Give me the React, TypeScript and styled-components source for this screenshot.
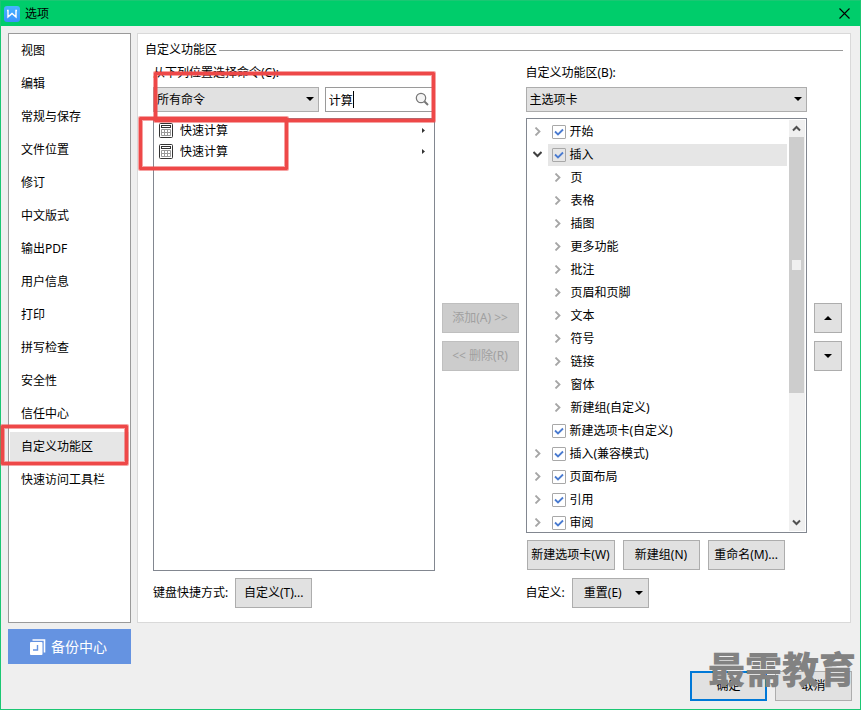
import React from 'react';
import styled, { createGlobalStyle, css } from 'styled-components';

const GlobalStyle = createGlobalStyle`
  *, *::before, *::after { box-sizing: border-box; }
  body {
    margin: 0;
    background: #efefef;
    color: #000;
    font: 12px/18px "Noto Sans", "Noto Sans CJK SC", sans-serif;
  }
  button, input, select { font: inherit; color: inherit; margin: 0; }
`;

const Window = styled.div`
  min-height: 100vh;
  display: flex;
  flex-direction: column;
  border: 1px solid #1bc773;
  background: #efefef;
`;

const TitleBar = styled.header`
  height: 25px;
  display: flex;
  align-items: center;
  gap: 5px;
  padding: 0 10px 0 3px;
  background: #00cd6b;
`;

const Title = styled.h1`
  flex: 1;
  margin: 0;
  font-size: 12px;
  font-weight: 400;
`;

const CloseButton = styled.button`
  display: flex;
  padding: 0;
  border: 0;
  background: none;
`;

const Body = styled.div`
  flex: 1;
  display: grid;
  grid-template-columns: 123px minmax(0, 1fr);
  grid-template-rows: 1fr auto;
  gap: 6px;
  padding: 7px 8px 8px 7px;
`;

const Sidebar = styled.nav`
  display: flex;
  flex-direction: column;
  gap: 4px;
  padding: 2px 1px;
  border: 1px solid #9a9a9a;
  background: #fff;
`;

const NavItem = styled.a<{ $active?: boolean }>`
  position: relative;
  display: flex;
  align-items: center;
  height: 29px;
  padding-left: 11px;
  color: inherit;
  text-decoration: none;
  background: ${(p) => (p.$active ? '#e6e6e6' : 'transparent')};
`;

const Panel = styled.main`
  display: flex;
  flex-direction: column;
  gap: 5px;
  margin-right: 1px;
  padding: 7px 7px 14px;
  border: 1px solid #d9d9d9;
  background: #fff;
`;

const SectionTitle = styled.h2`
  display: flex;
  align-items: center;
  gap: 2px;
  margin: 0;
  font-size: 12px;
  font-weight: 400;

  &::after {
    content: '';
    flex: 1;
    height: 1px;
    background: #9a9a9a;
  }
`;

const Columns = styled.div`
  flex: 1;
  display: grid;
  grid-template-columns: minmax(0, 1fr) 77px minmax(0, 1fr) 28px;
  gap: 7px;
  padding: 0 1px 0 8px;
`;

const Column = styled.section`
  display: flex;
  flex-direction: column;
`;

const FieldLabel = styled.label`
  margin-bottom: 5px;
`;

const ControlRow = styled.div`
  position: relative;
  display: flex;
  gap: 6px;
  margin-bottom: 6px;
`;

const SelectBox = styled.span`
  position: relative;
  flex: 1;
  display: flex;

  svg {
    position: absolute;
    right: 5px;
    top: 10px;
    pointer-events: none;
  }
`;

const Select = styled.select`
  appearance: none;
  width: 100%;
  height: 25px;
  padding: 0 20px 0 3px;
  border: 1px solid #adadad;
  border-radius: 0;
  background: #e1e1e1;
`;

const SearchBox = styled.span`
  position: relative;
  flex: 0 0 39%;
  display: flex;

  svg {
    position: absolute;
    right: 6px;
    top: 5px;
  }
`;

const SearchInput = styled.input`
  width: 100%;
  height: 25px;
  padding: 0 24px 0 3px;
  border: 1px solid #9a9a9a;
`;

const Caret = styled.i`
  position: absolute;
  left: 28px;
  top: 4px;
  width: 1px;
  height: 17px;
  background: #000;
`;

const listFrame = css`
  flex: 1 1 0;
  border: 1px solid #828790;
  background: #fff;
`;

const CommandList = styled.ul`
  ${listFrame}
  position: relative;
  min-height: 160px;
  margin: 0 0 7px;
  padding: 1px 9px 1px 5px;
  list-style: none;
`;

const Command = styled.li`
  display: flex;
  align-items: center;
  gap: 7px;
  height: 21px;

  span { flex: 1; }
`;

const Tree = styled.div`
  ${listFrame}
  display: flex;
  gap: 2px;
  min-height: 160px;
  margin-bottom: 7px;
  padding: 1px 1px 1px 0;
  overflow: hidden;
`;

const TreeRows = styled.ul`
  flex: 1;
  height: 0;
  margin: 0;
  padding: 0;
  list-style: none;
`;

const TreeRow = styled.li`
  display: grid;
  grid-template-columns: 21px 1fr;
  align-items: center;
  justify-items: center;
  height: 23px;
`;

const TreeLabel = styled.label<{ $active?: boolean }>`
  grid-column: 2;
  justify-self: stretch;
  display: flex;
  align-items: center;
  gap: 4px;
  height: 22px;
  padding-left: 4px;
  background: ${(p) => (p.$active ? '#e6e6e6' : 'transparent')};
`;

const TreeChild = styled.span`
  grid-column: 2;
  justify-self: stretch;
  display: grid;
  grid-template-columns: 19px 1fr;
  column-gap: 4px;
  align-items: center;

  svg { justify-self: center; }
`;

const CheckFrame = styled.span`
  display: grid;
  flex: none;
  place-items: center;

  > * { grid-area: 1 / 1; }
  svg { pointer-events: none; }
`;

const Checkbox = styled.input`
  appearance: none;
  width: 14px;
  height: 14px;
  border: 1px solid #a8a8a8;
  border-radius: 1px;
  background: transparent;
`;

const Scrollbar = styled.div`
  display: flex;
  flex-direction: column;
  align-items: center;
  width: 16px;
  padding-right: 1px;
  background: #f0f0f0;
`;

const ScrollButton = styled.button`
  display: flex;
  align-items: center;
  justify-content: center;
  width: 100%;
  height: 17px;
  padding: 0;
  border: 0;
  background: none;
`;

const Thumb = styled.div`
  flex: 17;
  display: grid;
  place-items: center;
  width: 100%;
  background: #cdcdcd;

  &::after {
    content: '';
    width: 9px;
    height: 10px;
    background: #f0f0f0;
  }
`;

const TrackRest = styled.div`
  flex: 8;
`;

const Button = styled.button<{ $wide?: boolean; $primary?: boolean }>`
  display: flex;
  align-items: center;
  justify-content: center;
  width: ${(p) => (p.$wide ? '88px' : '77px')};
  height: 30px;
  padding: 0;
  border: ${(p) => (p.$primary ? '2px solid #0078d7' : '1px solid #adadad')};
  background: #e1e1e1;
  white-space: nowrap;

  &:disabled {
    border-color: #bfbfbf;
    background: #cccccc;
    color: #a0a0a0;
  }
`;

const MenuButton = styled(Button)`
  justify-content: flex-end;
  gap: 13px;
  padding-right: 5px;
`;

const SquareButton = styled(Button)`
  width: 28px;
`;

const MiddleStack = styled.div`
  display: flex;
  flex-direction: column;
  justify-content: center;
  gap: 8px;
  padding-top: 2px;
`;

const ButtonRow = styled.div<{ $gap: number }>`
  display: flex;
  align-items: center;
  gap: ${(p) => p.$gap}px;
`;

const TabActions = styled(ButtonRow)`
  margin-bottom: 8px;
  padding-left: 1px;
`;

const BackupButton = styled.button`
  align-self: start;
  display: flex;
  align-items: center;
  justify-content: center;
  gap: 5px;
  height: 35px;
  padding: 0 2px 0 0;
  border: 0;
  background: #6593e1;
  color: #fff;
  font-size: 14px;
`;

const Footer = styled.footer`
  position: relative;
  display: flex;
  justify-content: flex-end;
  gap: 8px;
  padding-top: 42px;
`;

const Watermark = styled.span`
  position: absolute;
  right: -4px;
  bottom: 11px;
  color: #828282;
  font: 900 37px/44px "Noto Sans CJK SC", sans-serif;
  pointer-events: none;
`;

const highlight = css`
  position: absolute;
  z-index: 1;
  border: 3px solid #ee4848;
  border-radius: 1px;
  box-shadow: 0 0 0 1px rgba(238, 72, 72, 0.5), inset 0 0 0 1px rgba(238, 72, 72, 0.5);
  pointer-events: none;
`;

const NavHighlight = styled.i`
  ${highlight}
  inset: -7px 1px -4px -9px;
`;

const SearchHighlight = styled.i`
  ${highlight}
  inset: -15px 0 -10px 1px;
`;

const ResultHighlight = styled.li`
  ${highlight}
  left: -15px;
  top: -2px;
  width: 149px;
  height: 53px;
`;

const Logo = () => (
  <svg width="16" height="16" viewBox="0 0 16 16" aria-hidden="true">
    <defs>
      <linearGradient id="logo" x1="0" y1="0" x2="0" y2="1">
        <stop offset="0" stopColor="#46b4ff" />
        <stop offset="1" stopColor="#3a92fb" />
      </linearGradient>
    </defs>
    <rect width="16" height="16" rx="3" fill="url(#logo)" />
    <path d="M3 4.5H4V11L8 7.5L12 11V4.5H13" fill="none" stroke="#fff" strokeWidth="1.4" />
  </svg>
);

const CloseIcon = () => (
  <svg width="11" height="11" viewBox="0 0 11 11" aria-hidden="true">
    <path d="M.5 .5L10.500 10.500M10.500 .5L.5 10.500" stroke="#000" strokeWidth="1.1" />
  </svg>
);

const CaretDown = () => (
  <svg width="8" height="4" viewBox="0 0 8 4" aria-hidden="true">
    <path d="M0 0H8L4 4Z" />
  </svg>
);

const CaretUp = () => (
  <svg width="8" height="4" viewBox="0 0 8 4" aria-hidden="true">
    <path d="M0 4H8L4 0Z" />
  </svg>
);

const CaretRight = () => (
  <svg width="3" height="5" viewBox="0 0 3 5" aria-hidden="true">
    <path d="M0 0V5L3 2.500Z" fill="#333" />
  </svg>
);

const Chevron = ({ open }: { open?: boolean }) =>
  open ? (
    <svg width="9" height="7" viewBox="0 0 9 7" aria-hidden="true">
      <path d="M.5 1L4.500 5L8.500 1" fill="none" stroke="#404040" strokeWidth="2" />
    </svg>
  ) : (
    <svg width="7" height="9" viewBox="0 0 7 9" aria-hidden="true">
      <path d="M1.500 .5L5.500 4.500L1.500 8.500" fill="none" stroke="#a6a6a6" strokeWidth="1.8" />
    </svg>
  );

const ScrollChevron = ({ up }: { up?: boolean }) => (
  <svg width="9" height="7" viewBox="0 0 9 7" aria-hidden="true">
    <path d={up ? 'M1 5.500L4.500 2L8 5.500' : 'M1 1.500L4.500 5L8 1.500'} fill="none" stroke="#505050" strokeWidth="2" />
  </svg>
);

const Tick = () => (
  <svg width="10" height="8" viewBox="0 0 10 8" aria-hidden="true">
    <path d="M1 3.500L4 6.500L9 1.500" fill="none" stroke="#4a7bd0" strokeWidth="1.8" />
  </svg>
);

const SearchIcon = () => (
  <svg width="14" height="14" viewBox="0 0 14 14" aria-hidden="true">
    <circle cx="6" cy="6" r="4.700" fill="#f4f4f4" stroke="#777" strokeWidth="1.2" />
    <path d="M9.500 9.500L13 13" stroke="#777" strokeWidth="2" />
  </svg>
);

const Calculator = () => (
  <svg width="14" height="15" viewBox="0 0 14 15" aria-hidden="true">
    <rect x=".5" y=".5" width="13" height="14" rx="1" fill="#fff" stroke="#333" />
    <rect x="2.500" y="2.500" width="9" height="2" fill="#fff" stroke="#333" />
    <path d="M2.500 6.500H11.500V12.500H2.500ZM2.500 9.500H11.500M5.500 6.500V12.500M8.500 6.500V12.500" fill="none" stroke="#999" />
  </svg>
);

const BackupIcon = () => (
  <svg width="16" height="16" viewBox="0 0 16 16" aria-hidden="true">
    <path d="M2.500 1H14.500V13.500" fill="none" stroke="#fff" strokeWidth="1.600" />
    <rect x="0" y="3" width="12.500" height="13" rx="1" fill="#fff" />
    <path d="M7.500 6V11H3" fill="none" stroke="#6593e1" strokeWidth="1.400" />
  </svg>
);

const navItems = [
  '视图', '编辑', '常规与保存', '文件位置', '修订', '中文版式', '输出PDF', '用户信息',
  '打印', '拼写检查', '安全性', '信任中心', '自定义功能区', '快速访问工具栏',
];

type Node = { text: string; kind: 'tab' | 'open' | 'leaf' | 'group' };

const nodes: Node[] = [
  { text: '开始', kind: 'tab' },
  { text: '插入', kind: 'open' },
  ...['页', '表格', '插图', '更多功能', '批注', '页眉和页脚', '文本', '符号', '链接', '窗体', '新建组(自定义)'].map(
    (text): Node => ({ text, kind: 'group' }),
  ),
  { text: '新建选项卡(自定义)', kind: 'leaf' },
  { text: '插入(兼容模式)', kind: 'tab' },
  { text: '页面布局', kind: 'tab' },
  { text: '引用', kind: 'tab' },
  { text: '审阅', kind: 'tab' },
];

const TreeNode = ({ text, kind }: Node) =>
  kind === 'group' ? (
    <TreeRow>
      <TreeChild>
        <Chevron />
        {text}
      </TreeChild>
    </TreeRow>
  ) : (
    <TreeRow>
      {kind !== 'leaf' && <Chevron open={kind === 'open'} />}
      <TreeLabel $active={kind === 'open'}>
        <CheckFrame>
          <Checkbox type="checkbox" defaultChecked />
          <Tick />
        </CheckFrame>
        {text}
      </TreeLabel>
    </TreeRow>
  );

export default function App() {
  return (
    <>
      <GlobalStyle />
      <Window>
        <TitleBar>
          <Logo />
          <Title>选项</Title>
          <CloseButton aria-label="关闭"><CloseIcon /></CloseButton>
        </TitleBar>
        <Body>
          <Sidebar>
            {navItems.map((item) => {
              const active = item === '自定义功能区';
              return (
                <NavItem key={item} href="#" $active={active}>
                  {item}
                  {active && <NavHighlight />}
                </NavItem>
              );
            })}
          </Sidebar>
          <Panel>
            <SectionTitle>自定义功能区</SectionTitle>
            <Columns>
              <Column>
                <FieldLabel htmlFor="source">从下列位置选择命令(C):</FieldLabel>
                <ControlRow>
                  <SelectBox>
                    <Select id="source"><option>所有命令</option></Select>
                    <CaretDown />
                  </SelectBox>
                  <SearchBox>
                    <SearchInput aria-label="搜索命令" defaultValue="计算" />
                    <Caret />
                    <SearchIcon />
                  </SearchBox>
                  <SearchHighlight />
                </ControlRow>
                <CommandList>
                  <Command><Calculator /><span>快速计算</span><CaretRight /></Command>
                  <Command><Calculator /><span>快速计算</span><CaretRight /></Command>
                  <ResultHighlight aria-hidden="true" />
                </CommandList>
                <ButtonRow $gap={7}>
                  <span>键盘快捷方式:</span>
                  <Button>自定义(T)...</Button>
                </ButtonRow>
              </Column>
              <MiddleStack>
                <Button disabled>添加(A) &gt;&gt;</Button>
                <Button disabled>&lt;&lt; 删除(R)</Button>
              </MiddleStack>
              <Column>
                <FieldLabel htmlFor="tabs">自定义功能区(B):</FieldLabel>
                <ControlRow>
                  <SelectBox>
                    <Select id="tabs"><option>主选项卡</option></Select>
                    <CaretDown />
                  </SelectBox>
                </ControlRow>
                <Tree>
                  <TreeRows>
                    {nodes.map((node) => <TreeNode key={node.text + node.kind} {...node} />)}
                  </TreeRows>
                  <Scrollbar>
                    <ScrollButton aria-label="向上滚动"><ScrollChevron up /></ScrollButton>
                    <Thumb />
                    <TrackRest />
                    <ScrollButton aria-label="向下滚动"><ScrollChevron /></ScrollButton>
                  </Scrollbar>
                </Tree>
                <TabActions $gap={8}>
                  <Button $wide>新建选项卡(W)</Button>
                  <Button>新建组(N)</Button>
                  <Button>重命名(M)...</Button>
                </TabActions>
                <ButtonRow $gap={7}>
                  <span>自定义:</span>
                  <MenuButton>重置(E) <CaretDown /></MenuButton>
                </ButtonRow>
              </Column>
              <MiddleStack>
                <SquareButton aria-label="上移"><CaretUp /></SquareButton>
                <SquareButton aria-label="下移"><CaretDown /></SquareButton>
              </MiddleStack>
            </Columns>
          </Panel>
          <BackupButton><BackupIcon />备份中心</BackupButton>
          <Footer>
            <Button $primary>确定</Button>
            <Button>取消</Button>
            <Watermark>最需教育</Watermark>
          </Footer>
        </Body>
      </Window>
    </>
  );
}
